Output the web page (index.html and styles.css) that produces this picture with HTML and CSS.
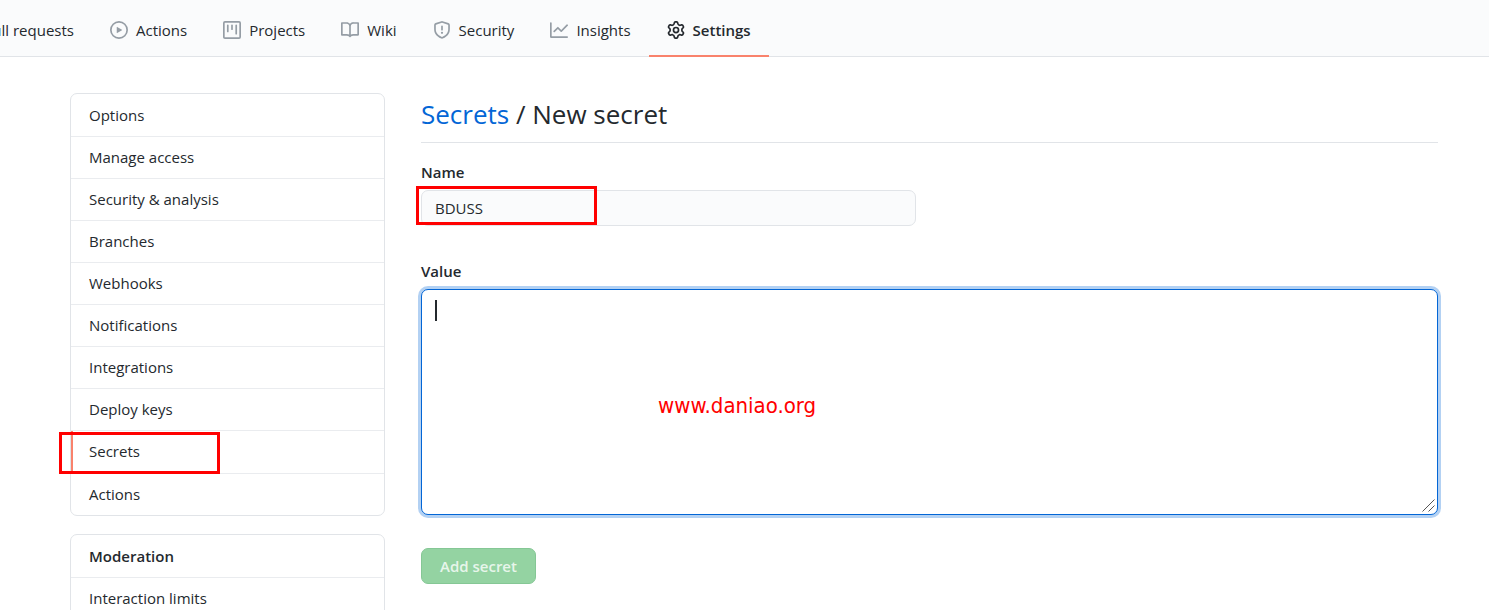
FILE: index.html
```html
<!DOCTYPE html>
<html lang="en">
<head>
<meta charset="utf-8">
<title>New secret</title>
<link rel="stylesheet" href="styles.css">
</head>
<body>
<nav class="topnav">
  <a class="tab tab-first" href="#">Pull requests</a>
  <a class="tab" href="#"><svg class="icon" viewBox="0 0 16 16"><path fill-rule="evenodd" d="M1.5 8a6.5 6.5 0 1113 0 6.5 6.5 0 01-13 0zM8 0a8 8 0 100 16A8 8 0 008 0zM6.379 5.227A.25.25 0 006 5.442v5.117a.25.25 0 00.379.214l4.264-2.559a.25.25 0 000-.428L6.379 5.227z"/></svg>Actions</a>
  <a class="tab" href="#"><svg class="icon" viewBox="0 0 16 16"><path fill-rule="evenodd" d="M1.75 0A1.75 1.75 0 000 1.75v12.5C0 15.216.784 16 1.75 16h12.5A1.75 1.75 0 0016 14.25V1.75A1.75 1.75 0 0014.25 0H1.75zM1.5 1.75a.25.25 0 01.25-.25h12.5a.25.25 0 01.25.25v12.5a.25.25 0 01-.25.25H1.75a.25.25 0 01-.25-.25V1.75zM11.75 3a.75.75 0 00-.75.75v7.5a.75.75 0 001.5 0v-7.5a.75.75 0 00-.75-.75zm-8.25.75a.75.75 0 011.5 0v5.5a.75.75 0 01-1.5 0v-5.5zM8 3a.75.75 0 00-.75.75v3.5a.75.75 0 001.5 0v-3.5A.75.75 0 008 3z"/></svg>Projects</a>
  <a class="tab" href="#"><svg class="icon" viewBox="0 0 16 16"><path fill-rule="evenodd" d="M0 1.75A.75.75 0 01.75 1h4.253c1.227 0 2.317.59 3 1.501A3.744 3.744 0 0111.006 1h4.245a.75.75 0 01.75.75v10.5a.75.75 0 01-.75.75h-4.507a2.25 2.25 0 00-1.591.659l-.622.621a.75.75 0 01-1.06 0l-.622-.621A2.25 2.25 0 005.258 13H.75a.75.75 0 01-.75-.75V1.75zm8.755 3a2.25 2.25 0 012.25-2.25H14.5v9h-3.757c-.71 0-1.4.201-1.992.572l.004-7.322zm-1.504 7.324l.004-5.073-.002-2.253A2.25 2.25 0 005.003 2.5H1.5v9h3.757a3.75 3.75 0 011.994.574z"/></svg>Wiki</a>
  <a class="tab" href="#"><svg class="icon" viewBox="0 0 16 16"><path fill-rule="evenodd" d="M7.467.133a1.75 1.75 0 011.066 0l5.25 1.68A1.75 1.75 0 0115 3.48V7c0 1.566-.32 3.182-1.303 4.682-.983 1.498-2.585 2.813-5.032 3.855a1.7 1.7 0 01-1.33 0c-2.447-1.042-4.049-2.357-5.032-3.855C1.32 10.182 1 8.566 1 7V3.48a1.75 1.75 0 011.217-1.667l5.25-1.68zm.61 1.429a.25.25 0 00-.153 0l-5.25 1.68a.25.25 0 00-.174.238V7c0 1.358.275 2.666 1.057 3.86.784 1.194 2.121 2.34 4.366 3.297a.2.2 0 00.154 0c2.245-.956 3.582-2.104 4.366-3.298C13.225 9.666 13.5 8.36 13.5 7V3.48a.25.25 0 00-.174-.237l-5.25-1.68zM9 10.5a1 1 0 11-2 0 1 1 0 012 0zm-.25-5.75a.75.75 0 10-1.5 0v3a.75.75 0 001.5 0v-3z"/></svg>Security</a>
  <a class="tab" href="#"><svg class="icon" viewBox="0 0 16 16"><path fill-rule="evenodd" d="M1.5 1.75a.75.75 0 00-1.5 0v12.5c0 .414.336.75.75.75h14.5a.75.75 0 000-1.500H1.500V1.750zm14.280 2.530a.75.75 0 00-1.060-1.060L10 7.940 7.530 5.470a.75.75 0 00-1.060 0L3.220 8.720a.75.75 0 001.060 1.060L7 7.060l2.470 2.470a.75.75 0 001.060 0l5.250-5.250z"/></svg>Insights</a>
  <a class="tab tab-current" href="#" aria-current="page"><svg class="icon" viewBox="0 0 16 16"><path fill-rule="evenodd" d="M7.429 1.525a6.593 6.593 0 011.142 0c.036.003.108.036.137.146l.289 1.105c.147.56.55.967.997 1.189.174.086.341.183.501.29.417.278.97.423 1.53.27l1.102-.303c.11-.03.175.016.195.046.219.31.41.641.573.989.014.031.022.11-.059.19l-.815.806c-.411.406-.562.957-.53 1.456a4.588 4.588 0 010 .582c-.032.499.119 1.05.53 1.456l.815.806c.08.08.073.159.059.19a6.494 6.494 0 01-.573.99c-.02.029-.086.074-.195.045l-1.103-.303c-.559-.153-1.112-.008-1.529.27-.16.107-.327.204-.5.29-.449.222-.851.628-.998 1.189l-.289 1.105c-.029.11-.101.143-.137.146a6.613 6.613 0 01-1.142 0c-.036-.003-.108-.037-.137-.146l-.289-1.105c-.147-.56-.55-.967-.997-1.189a4.502 4.502 0 01-.501-.29c-.417-.278-.97-.423-1.530-.27l-1.102.303c-.11.03-.175-.016-.195-.046a6.492 6.492 0 01-.573-.989c-.014-.031-.022-.11.059-.19l.815-.806c.411-.406.562-.957.530-1.456a4.587 4.587 0 010-.582c.032-.499-.119-1.050-.530-1.456l-.815-.806c-.08-.08-.073-.159-.059-.19a6.440 6.440 0 01.573-.99c.02-.029.086-.075.195-.045l1.103.303c.559.153 1.112.008 1.529-.27.160-.107.327-.204.500-.290.449-.222.851-.628.998-1.189l.289-1.105c.029-.11.101-.143.137-.146zM8 0c-.236 0-.470.010-.701.030-.743.065-1.290.615-1.458 1.261l-.290 1.106c-.017.066-.078.158-.211.224a5.994 5.994 0 00-.668.386c-.123.082-.233.090-.300.071L3.270 2.776c-.644-.177-1.392.020-1.820.630a7.977 7.977 0 00-.704 1.217c-.315.675-.111 1.422.363 1.891l.815.806c.050.048.098.147.088.294a6.084 6.084 0 000 .772c.010.147-.038.246-.088.294l-.815.806c-.474.469-.678 1.216-.363 1.891.200.428.436.835.704 1.218.428.609 1.176.806 1.820.630l1.103-.303c.066-.019.176-.011.299.071.213.143.436.272.668.386.133.066.194.158.212.224l.289 1.106c.169.646.715 1.196 1.458 1.260a8.094 8.094 0 001.402 0c.743-.064 1.290-.614 1.458-1.260l.290-1.106c.017-.066.078-.158.211-.224a5.980 5.980 0 00.668-.386c.123-.082.233-.090.300-.071l1.102.302c.644.177 1.392-.020 1.820-.630.268-.382.505-.789.704-1.217.315-.675.111-1.422-.364-1.891l-.814-.806c-.050-.048-.098-.147-.088-.294a6.100 6.100 0 000-.772c-.010-.147.039-.246.088-.294l.814-.806c.475-.469.679-1.216.364-1.891a7.992 7.992 0 00-.704-1.218c-.428-.609-1.176-.806-1.820-.630l-1.103.303c-.066.019-.176.011-.299-.071a5.991 5.991 0 00-.668-.386c-.133-.066-.194-.158-.212-.224L10.160 1.290C9.990.645 9.444.095 8.701.031A8.094 8.094 0 008 0zm1.500 8a1.500 1.500 0 11-3 0 1.500 1.500 0 013 0zM11 8a3 3 0 11-6 0 3 3 0 016 0z"/></svg>Settings</a>
</nav>
<main class="page">
  <aside class="sidebar">
    <nav class="menu">
      <a class="menu-item" href="#">Options</a>
      <a class="menu-item" href="#">Manage access</a>
      <a class="menu-item" href="#">Security &amp; analysis</a>
      <a class="menu-item" href="#">Branches</a>
      <a class="menu-item" href="#">Webhooks</a>
      <a class="menu-item" href="#">Notifications</a>
      <a class="menu-item" href="#">Integrations</a>
      <a class="menu-item" href="#">Deploy keys</a>
      <a class="menu-item menu-current" href="#" aria-current="page">Secrets<span class="mark mark-secrets"></span></a>
      <a class="menu-item" href="#">Actions</a>
    </nav>
    <nav class="menu">
      <h2 class="menu-item menu-heading">Moderation</h2>
      <a class="menu-item" href="#">Interaction limits</a>
    </nav>
  </aside>
  <section class="content">
    <h1 class="title"><a class="title-link" href="#">Secrets</a> / New secret</h1>
    <form class="form">
      <label class="label" for="name">Name</label>
      <div class="field field-name">
        <input class="input" id="name" type="text" value="BDUSS">
        <span class="mark mark-name"></span>
      </div>
      <label class="label" for="value">Value</label>
      <div class="field field-value">
        <textarea class="textarea" id="value"></textarea>
        <span class="caret"></span>
        <svg class="grip" viewBox="0 0 13 13"><path d="M0.500 12.500l12-12M6.500 12.500l6-6"/></svg>
        <span class="watermark">www.daniao.org</span>
      </div>
      <button class="button" type="submit" disabled>Add secret</button>
    </form>
  </section>
</main>
</body>
</html>
```
FILE: styles.css
```css
* { box-sizing: border-box; }
body {
  margin: 0;
  height: 100vh;
  overflow: hidden;
  background: #fff;
  color: #24292e;
  font: 15px/24px "Segoe UI", "Open Sans", "Noto Sans", sans-serif;
}
a { color: inherit; text-decoration: none; }
.topnav {
  display: flex;
  height: 57px;
  background: #fafbfc;
  border-bottom: 1px solid #e1e4e8;
}
.tab {
  display: flex;
  align-items: center;
  gap: 8px;
  height: 57px;
  padding: 5px 18px 0;
  white-space: nowrap;
  border-bottom: 2px solid transparent;
}
.tab-first { width: 92px; justify-content: flex-end; }
.tab-current { font-weight: 600; border-bottom-color: #f9826c; }
.icon { width: 18px; height: 18px; flex: none; fill: #959da5; }
.tab-current .icon { fill: #24292e; }
.page {
  display: flex;
  gap: 36px;
  padding: 36px 51px 0 70px;
}
.sidebar { flex: none; width: 315px; }
.menu {
  margin-bottom: 18px;
  padding-top: 1px;
  border: 1px solid #e1e4e8;
  border-radius: 7px;
}
.menu-item {
  position: relative;
  display: block;
  margin: 0;
  padding: 9px 18px;
  border-bottom: 1px solid #eaecef;
  font-size: 15px;
  line-height: 23px;
}
.menu-item:last-child { border-bottom: 0; }
.menu-heading { font-weight: 600; }
.menu-current { padding-bottom: 10px; }
.menu-current::before {
  content: "";
  position: absolute;
  inset: 0 auto 0 0;
  width: 2px;
  background: #f9826c;
}
.mark { position: absolute; border: 3px solid #f00; pointer-events: none; }
.mark-secrets { left: -12px; top: 1px; width: 161px; height: 42px; }
.mark-name { left: -5px; top: -4px; width: 181px; height: 39px; }
.content { flex: 1; min-width: 0; }
.title {
  margin: 0 0 17px;
  padding-bottom: 7px;
  border-bottom: 1px solid #e1e4e8;
  font-size: 26px;
  font-weight: 400;
  line-height: 42px;
}
.title-link { color: #0366d6; }
.form { display: flex; flex-direction: column; align-items: flex-start; }
.label { margin-bottom: 6px; font-weight: 600; }
.field { position: relative; }
.field-name { width: 495px; max-width: 100%; margin-bottom: 33px; }
.field-value { width: 100%; margin-bottom: 33px; }
.input, .textarea {
  display: block;
  width: 100%;
  padding: 5px 13px;
  border: 1px solid #e1e4e8;
  border-radius: 7px;
  outline: none;
  color: #24292e;
  font: inherit;
}
.input { height: 36px; background: #fafbfc; }
.textarea {
  height: 226px;
  background: #fff;
  border-color: #0366d6;
  box-shadow: 0 0 0 3px rgba(3, 102, 214, .3);
  resize: none;
}
.caret { position: absolute; left: 14px; top: 11px; width: 2px; height: 21px; background: #24292e; }
.grip {
  position: absolute;
  right: 3px;
  bottom: 3px;
  width: 13px;
  height: 13px;
  fill: none;
  stroke: #555;
  pointer-events: none;
}
.watermark {
  position: absolute;
  left: 237px;
  top: 102px;
  color: #f00;
  font: 22px/30px Tahoma, "DejaVu Sans Condensed", "Noto Sans", sans-serif;
}
.button {
  height: 36px;
  padding: 0 18px;
  border: 1px solid #85c795;
  border-radius: 7px;
  background: #94d3a2;
  color: rgba(255, 255, 255, .8);
  font: inherit;
  font-weight: 600;
}
```
